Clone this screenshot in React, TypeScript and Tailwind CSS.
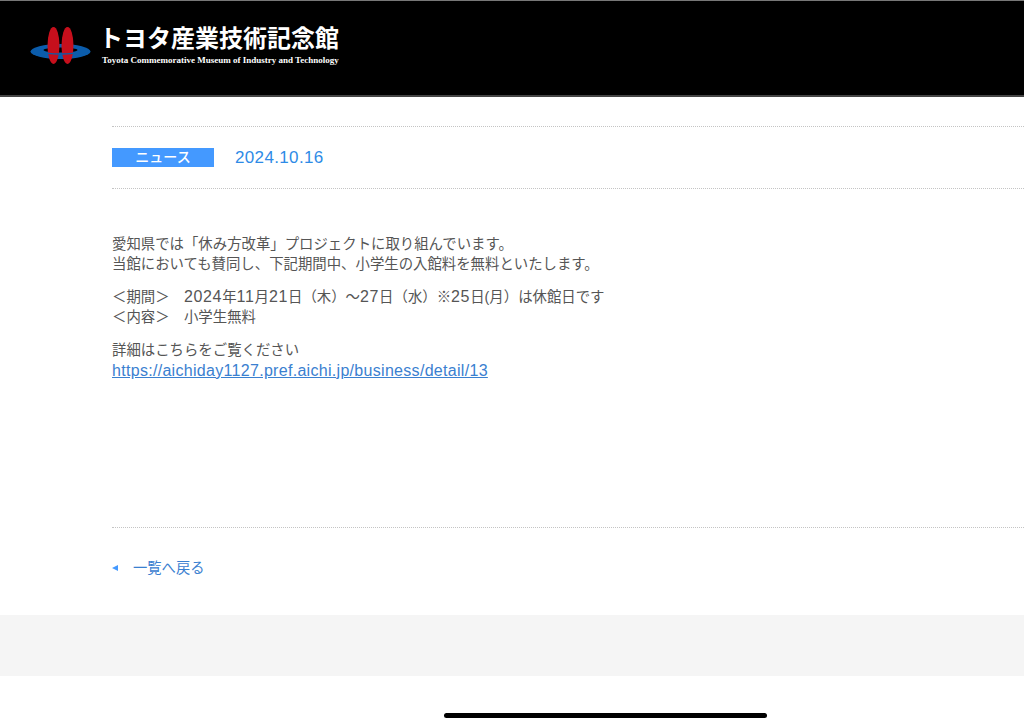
function N({ children }: { children: string }) {
  return <span className="text-[16px] leading-none tracking-[0.65px]">{children}</span>;
}

export default function App() {
  const jp = "font-['Liberation_Sans','Noto_Sans_CJK_JP',sans-serif]";
  return (
    <div className={`relative w-[1024px] h-[726px] overflow-hidden bg-white ${jp}`}>
      <header className="h-[97px] bg-black border-t border-t-[#777] border-b-2 border-b-[#444] flex items-center pl-[30px]">
        <div className="flex items-center gap-[8px] -mt-[5px]">
          <svg width="61" height="38" viewBox="0 0 61 38" className="mt-[1px]">
            <ellipse cx="30.5" cy="24.5" rx="30" ry="7.5" fill="#0b5cab" />
            <ellipse cx="30.5" cy="23" rx="17" ry="2.6" fill="#000" />
            <ellipse cx="23.5" cy="18.5" rx="6" ry="18.5" fill="#c70f1c" />
            <ellipse cx="37.5" cy="18.5" rx="6" ry="18.5" fill="#c70f1c" />
            <path d="M17.5 27a30 7.5 0 0 0 26 0l0-1.6a17 2.6 0 0 1-26 0Z" fill="#0b5cab" />
          </svg>
          <div className="flex flex-col w-[240px] text-white">
            <div className="text-[24px] leading-[28px] font-bold whitespace-nowrap font-['Liberation_Serif','Noto_Sans_CJK_JP',serif]">トヨタ産業技術記念館</div>
            <div className="text-[9px] leading-[11px] mt-[2px] ml-[3px] font-bold whitespace-nowrap font-['Liberation_Serif',serif]">Toyota Commemorative Museum of Industry and Technology</div>
          </div>
        </div>
      </header>
      <main className="pl-[112px] pt-[29px]">
        <div className="border-t border-dotted border-[#c4c4c4] h-[63px] border-b flex items-center">
          <span className="w-[102px] h-[19px] bg-[#4499ff] text-white text-[14px] font-medium leading-[18px] text-center">ニュース</span>
          <span className="ml-[21px] text-[17px] tracking-[0.35px] text-[#2e8be6]">2024.10.16</span>
        </div>
        <div className="pt-[46px] h-[339px] border-b border-dotted border-[#c4c4c4] text-[14.4px] leading-[19.6px] text-[#555]">
          <p>愛知県では「休み方改革」プロジェクトに取り組んでいます。<br />当館においても賛同し、下記期間中、小学生の入館料を無料といたします。</p>
          <p className="mt-[14px]">＜期間＞　<N>2024</N>年<N>11</N>月<N>21</N>日（木）～<N>27</N>日（水）※<N>25</N>日(月）は休館日です<br />＜内容＞　小学生無料</p>
          <p className="mt-[14px]">詳細はこちらをご覧ください</p>
          <p className="mt-[1px]"><a className="text-[16px] leading-none tracking-[0.3px] text-[#3a80d0] underline">https://aichiday1127.pref.aichi.jp/business/detail/13</a></p>
        </div>
        <div className="h-[87px] flex items-center pb-[5px]">
          <span className="w-0 h-0 -mt-[3px] border-y-[3px] border-y-transparent border-r-[6px] border-r-[#4499ff]" />
          <a className="ml-[15px] text-[14.3px] text-[#3a80d0]">一覧へ戻る</a>
        </div>
      </main>
      <div className="h-[61px] bg-[#f5f5f5]" />
      <div className="absolute left-[444px] top-[713px] w-[323px] h-[5px] rounded-full bg-black" />
    </div>
  );
}
